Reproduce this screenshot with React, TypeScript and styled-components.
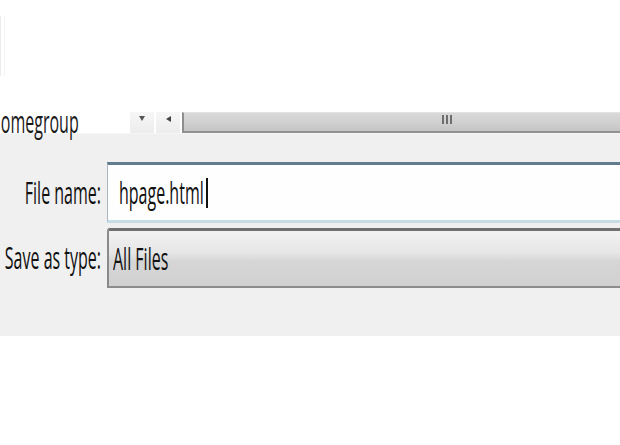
import React from 'react';
import styled, { createGlobalStyle } from 'styled-components';

const GlobalStyle = createGlobalStyle`
  html, body {
    margin: 0;
    padding: 0;
    background: #ffffff;
  }
  body {
    font-family: 'Open Sans', 'Liberation Sans', sans-serif;
    overflow: hidden;
  }
`;

const Page = styled.div`
  width: 620px;
  height: 445px;
  display: flex;
  flex-direction: column;
  overflow: hidden;
  background: #ffffff;
`;

const TopArea = styled.div`
  height: 112px;
  padding-top: 16px;
  box-sizing: border-box;
  background: #ffffff;
`;

const PaneEdge = styled.div`
  width: 3px;
  height: 60px;
  border-left: 1px solid #ececec;
  border-right: 1px solid #f4f4f4;
`;

const NavRow = styled.div`
  height: 21px;
  display: flex;
  align-items: stretch;
  background: #ffffff;
`;

const NavCell = styled.div`
  width: 130px;
  overflow-x: clip;
  overflow-y: visible;
  display: flex;
  align-items: center;
`;

// the screenshot is stretched vertically, so the text is drawn tall and narrow
const Tall = styled.span`
  display: inline-block;
  font-size: 16px;
  line-height: 1;
  white-space: nowrap;
  color: #111111;
  transform: scaleY(1.9);
  transform-origin: center;
`;

const NavText = styled(Tall)`
  margin-left: -11px;
  margin-top: -2px;
  color: #1a1a1a;
`;

const ScrollBar = styled.div`
  flex: 1;
  display: flex;
  align-items: stretch;
  gap: 2px;
`;

const ScrollButton = styled.div`
  width: 24px;
  display: flex;
  justify-content: center;
  align-items: flex-start;
  padding-top: 4px;
  box-sizing: border-box;
  background: linear-gradient(#f7f7f7, #ececec);
  svg {
    display: block;
  }
`;

const Thumb = styled.div`
  flex: 1;
  display: flex;
  align-items: center;
  padding-left: 258px;
  box-sizing: border-box;
  border-left: 2px solid #8e8e8e;
  border-bottom: 2px solid #929292;
  border-top: 1px solid #e2e2e2;
  background: linear-gradient(#d9d9d9, #cfcfcf 60%, #c4c4c4);
`;

const Grip = styled.div`
  display: flex;
  gap: 2px;
  margin-top: -6px;
  span {
    width: 2px;
    height: 9px;
    background: #6e6e6e;
  }
`;

const Form = styled.div`
  height: 203px;
  background: #f0f0f0;
  border-top: 1px solid #f6f6f6;
  padding-top: 28px;
  box-sizing: border-box;
  display: flex;
  flex-direction: column;
  gap: 5px;
`;

const Row = styled.div`
  display: grid;
  grid-template-columns: 107px 1fr;
  align-items: center;
`;

const Label = styled.div`
  text-align: right;
  padding-right: 6px;
`;

const FileInput = styled.div`
  height: 61px;
  box-sizing: border-box;
  border-top: 3px solid #617b8f;
  border-left: 1px solid #a9b6c1;
  border-bottom: 3px solid #c6dde6;
  background: #fefefe;
  display: flex;
  align-items: center;
  padding-left: 11px;
`;

const Caret = styled.span`
  width: 2px;
  height: 30px;
  background: #111111;
  margin-left: 2px;
`;

const Combo = styled.div`
  height: 60px;
  box-sizing: border-box;
  border-top: 3px solid #707070;
  border-left: 2px solid #8a8a8a;
  border-bottom: 2px solid #8c8c8c;
  border-top-left-radius: 3px;
  background: linear-gradient(#f2f2f2, #e6e6e6 40%, #d6d6d6 55%, #d1d1d1);
  display: flex;
  align-items: center;
  padding-left: 4px;
`;

const BottomArea = styled.div`
  flex: 1;
  background: #ffffff;
`;

export default function App() {
  return (
    <Page>
      <GlobalStyle />
      <TopArea>
        <PaneEdge />
      </TopArea>

      <NavRow>
        <NavCell>
          <NavText>Homegroup</NavText>
        </NavCell>
        <ScrollBar>
          <ScrollButton>
            <svg width="6" height="5" viewBox="0 0 6 5"><path d="M0 0h6L3 5z" fill="#555" /></svg>
          </ScrollButton>
          <ScrollButton>
            <svg width="5" height="6" viewBox="0 0 5 6"><path d="M5 0v6L0 3z" fill="#444" /></svg>
          </ScrollButton>
          <Thumb>
            <Grip>
              <span />
              <span />
              <span />
            </Grip>
          </Thumb>
        </ScrollBar>
      </NavRow>

      <Form>
        <Row>
          <Label>
            <Tall>File name:</Tall>
          </Label>
          <FileInput>
            <Tall>hpage.html</Tall>
            <Caret />
          </FileInput>
        </Row>
        <Row>
          <Label>
            <Tall>Save as type:</Tall>
          </Label>
          <Combo>
            <Tall>All Files</Tall>
          </Combo>
        </Row>
      </Form>

      <BottomArea />
    </Page>
  );
}
